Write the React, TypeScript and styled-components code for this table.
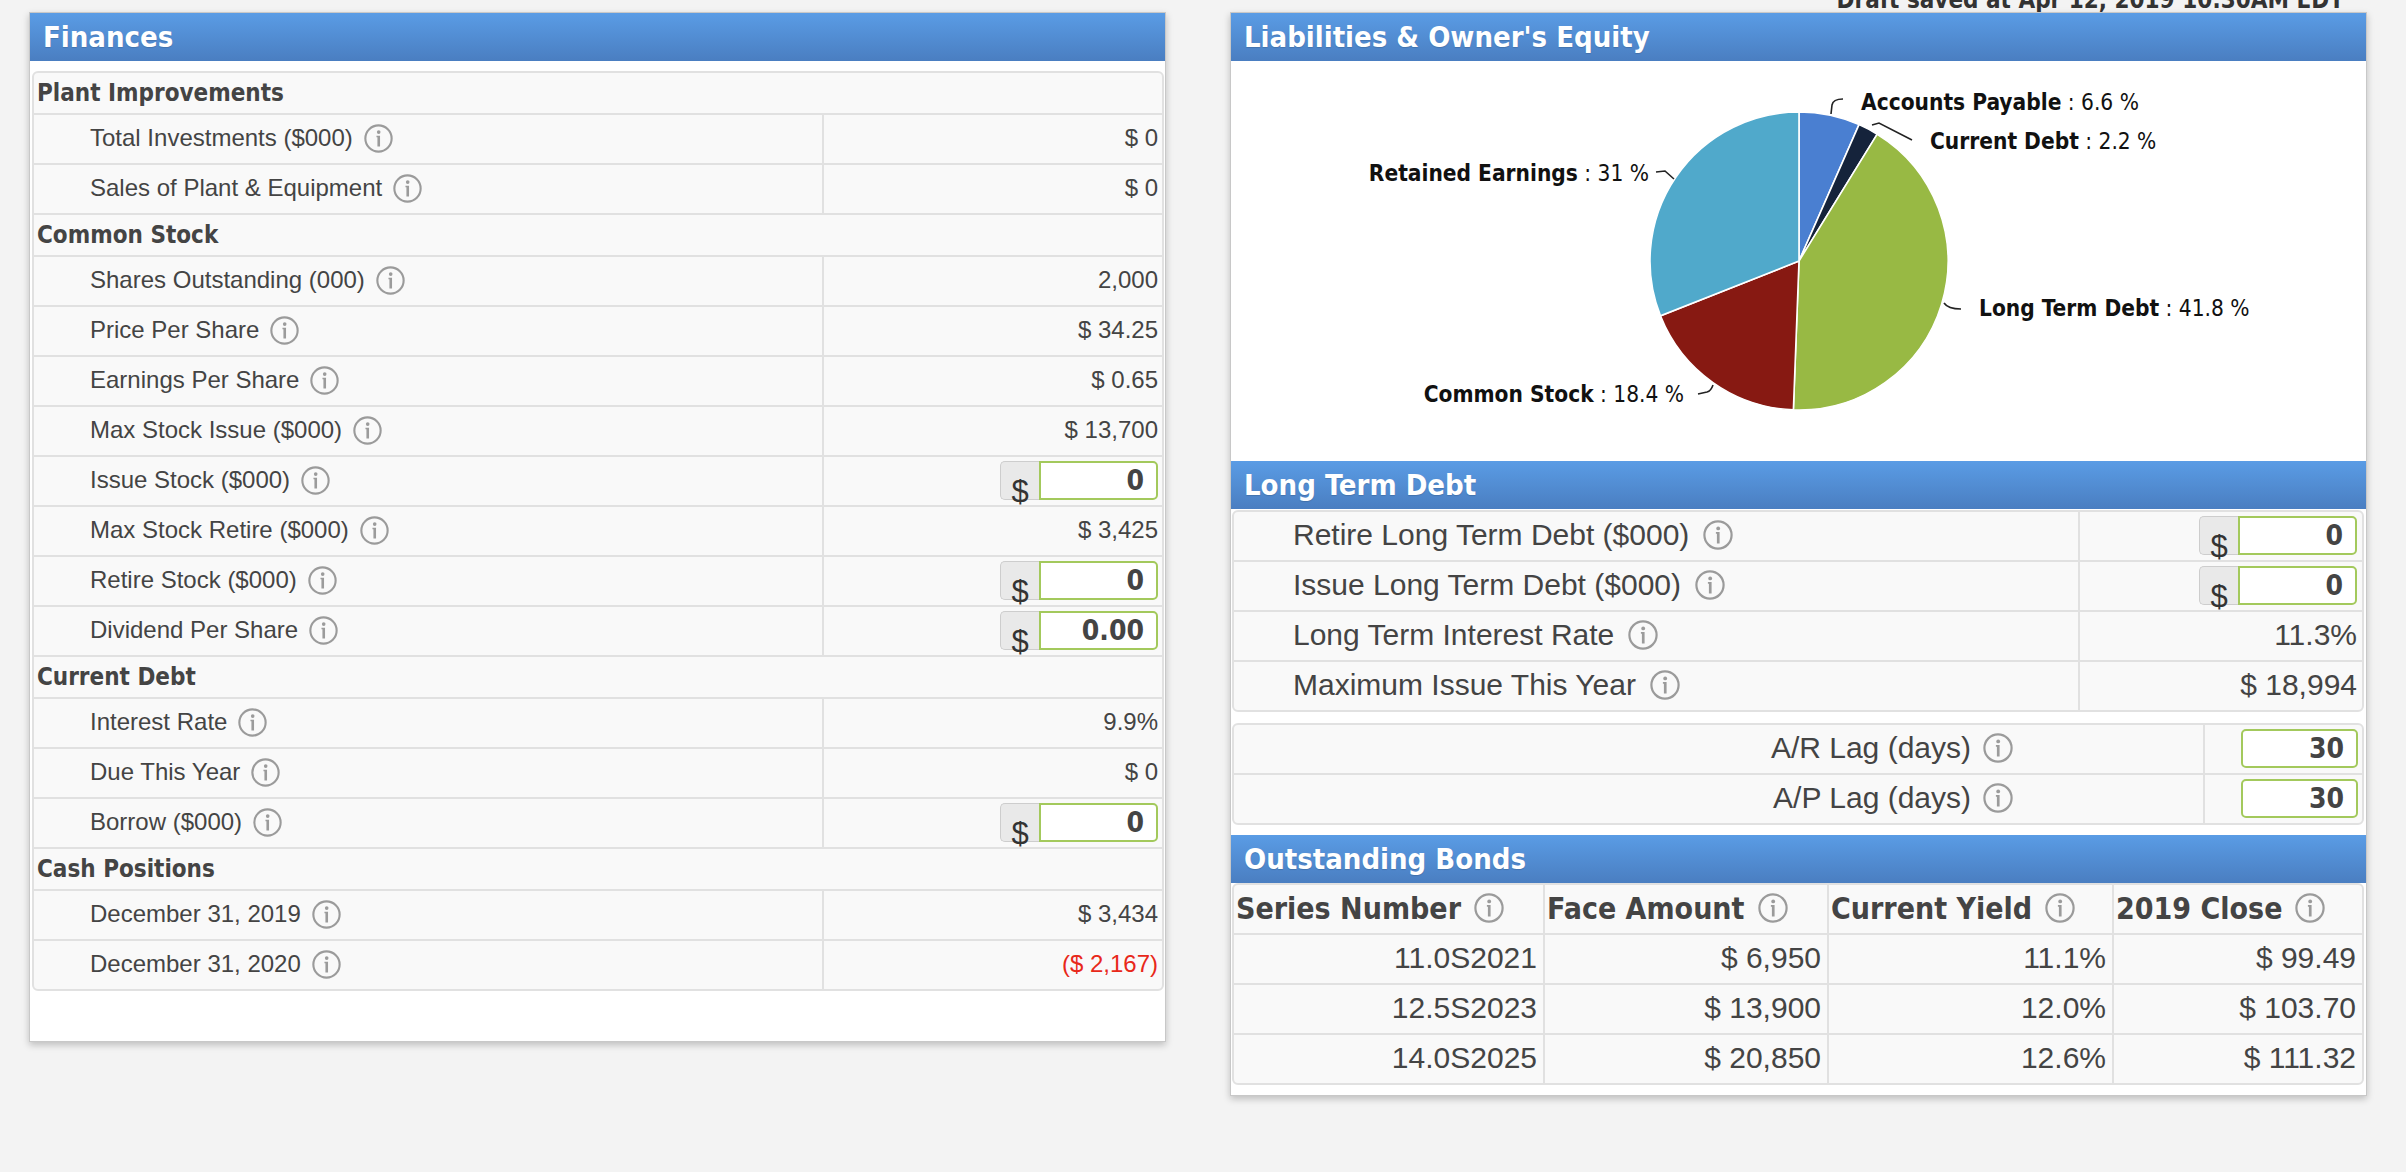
import React from 'react'
import styled, { createGlobalStyle } from 'styled-components'

const HEAD_FONT = `"DejaVu Sans Condensed", "Liberation Sans", sans-serif`
const BODY_FONT = `"Liberation Sans", Arial, sans-serif`
const LINE = '#e1e1e1'

const GlobalStyle = createGlobalStyle`
  html, body {
    margin: 0;
    padding: 0;
  }
  body {
    background: #f3f3f3;
    font-family: ${BODY_FONT};
    color: #444;
  }
`

type FinanceRow = {
  label: string
  value?: string
  input?: string
  negative?: boolean
}

type FinanceSection = {
  title: string
  rows: FinanceRow[]
}

const financeSections: FinanceSection[] = [
  {
    title: 'Plant Improvements',
    rows: [
      { label: 'Total Investments ($000)', value: '$ 0' },
      { label: 'Sales of Plant & Equipment', value: '$ 0' },
    ],
  },
  {
    title: 'Common Stock',
    rows: [
      { label: 'Shares Outstanding (000)', value: '2,000' },
      { label: 'Price Per Share', value: '$ 34.25' },
      { label: 'Earnings Per Share', value: '$ 0.65' },
      { label: 'Max Stock Issue ($000)', value: '$ 13,700' },
      { label: 'Issue Stock ($000)', input: '0' },
      { label: 'Max Stock Retire ($000)', value: '$ 3,425' },
      { label: 'Retire Stock ($000)', input: '0' },
      { label: 'Dividend Per Share', input: '0.00' },
    ],
  },
  {
    title: 'Current Debt',
    rows: [
      { label: 'Interest Rate', value: '9.9%' },
      { label: 'Due This Year', value: '$ 0' },
      { label: 'Borrow ($000)', input: '0' },
    ],
  },
  {
    title: 'Cash Positions',
    rows: [
      { label: 'December 31, 2019', value: '$ 3,434' },
      { label: 'December 31, 2020', value: '($ 2,167)', negative: true },
    ],
  },
]

const longTermRows: FinanceRow[] = [
  { label: 'Retire Long Term Debt ($000)', input: '0' },
  { label: 'Issue Long Term Debt ($000)', input: '0' },
  { label: 'Long Term Interest Rate', value: '11.3%' },
  { label: 'Maximum Issue This Year', value: '$ 18,994' },
]

const lagRows = [
  { label: 'A/R Lag (days)', value: '30' },
  { label: 'A/P Lag (days)', value: '30' },
]

const bondHeads = ['Series Number', 'Face Amount', 'Current Yield', '2019 Close']
const bonds = [
  ['11.0S2021', '$ 6,950', '11.1%', '$ 99.49'],
  ['12.5S2023', '$ 13,900', '12.0%', '$ 103.70'],
  ['14.0S2025', '$ 20,850', '12.6%', '$ 111.32'],
]

// pie, clockwise from 12 o'clock
const slices = [
  { name: 'Accounts Payable', pct: 6.6, color: '#4a7fd1' },
  { name: 'Current Debt', pct: 2.2, color: '#15233b' },
  { name: 'Long Term Debt', pct: 41.8, color: '#98b944' },
  { name: 'Common Stock', pct: 18.4, color: '#871912' },
  { name: 'Retained Earnings', pct: 31, color: '#50a9cb' },
]

const pieLabels = [
  { name: 'Accounts Payable', pct: '6.6', x: 630, y: 49, anchor: 'start', line: 'M600 53 L601 44 Q602 38 612 38' },
  { name: 'Current Debt', pct: '2.2', x: 699, y: 88, anchor: 'start', line: 'M641 64 L648 62 L681 79' },
  { name: 'Retained Earnings', pct: '31', x: 418, y: 120, anchor: 'end', line: 'M425 111 L434 110 L443 118' },
  { name: 'Long Term Debt', pct: '41.8', x: 748, y: 255, anchor: 'start', line: 'M713 242 Q717 248 730 248' },
  { name: 'Common Stock', pct: '18.4', x: 453, y: 341, anchor: 'end', line: 'M467 333 L476 331 Q480 330 482 324' },
]

const Page = styled.div`
  width: 2406px;
  min-height: 1172px;
  box-sizing: border-box;
  padding-left: 29px;
  display: grid;
  grid-template-columns: 1137px 1137px;
  column-gap: 64px;
  align-items: start;
`

const LeftColumn = styled.div`
  padding-top: 12px;
`

const RightColumn = styled.div`
  display: flex;
  flex-direction: column;
`

const DraftNote = styled.div`
  height: 12px;
  display: flex;
  justify-content: flex-end;
  padding-right: 23px;
  font: bold 24px ${HEAD_FONT};
  font-stretch: condensed;
  line-height: 24px;
  color: #333;
  white-space: nowrap;
`

const DraftText = styled.span`
  margin-top: -12px;
`

const Panel = styled.section`
  background: #fff;
  border: 1px solid #c8c8c8;
  box-shadow: 0 3px 7px rgba(0, 0, 0, 0.22);
  box-sizing: border-box;
`

const PanelHeader = styled.h2`
  margin: 0;
  height: 48px;
  padding-left: 13px;
  display: flex;
  align-items: center;
  background: linear-gradient(#5a9ce5, #4a7ec1);
  color: #fff;
  font: bold 29px ${HEAD_FONT};
  font-stretch: condensed;
  text-shadow: 0 1px 1px rgba(0, 0, 0, 0.15);
`

const PanelBody = styled.div<{ $pad: string }>`
  padding: ${(p) => p.$pad};
`

const Table = styled.div<{ $size: number }>`
  border: 2px solid ${LINE};
  border-radius: 6px;
  background: #f9f9f9;
  overflow: hidden;
  font-size: ${(p) => p.$size}px;
  color: #444;

  & > div:last-child {
    border-bottom: 0;
    height: 48px;
  }
`

const Row = styled.div<{ $cols: string }>`
  display: grid;
  grid-template-columns: ${(p) => p.$cols};
  height: 50px;
  box-sizing: border-box;
  border-bottom: 2px solid ${LINE};
`

const SectionRow = styled.div`
  height: 42px;
  box-sizing: border-box;
  border-bottom: 2px solid ${LINE};
  display: flex;
  align-items: center;
  padding-left: 3px;
  font: bold 24px ${HEAD_FONT};
  font-stretch: condensed;
  color: #444;
`

const Cell = styled.div<{
  $right?: boolean
  $padL?: number
  $padR?: number
  $divider?: boolean
  $bold?: boolean
  $red?: boolean
}>`
  display: flex;
  align-items: center;
  justify-content: ${(p) => (p.$right ? 'flex-end' : 'flex-start')};
  padding: 0 ${(p) => p.$padR ?? 0}px 2px ${(p) => p.$padL ?? 0}px;
  border-left: ${(p) => (p.$divider ? `2px solid ${LINE}` : '0')};
  min-width: 0;
  white-space: nowrap;
  color: ${(p) => (p.$red ? '#e8281a' : 'inherit')};
  ${(p) =>
    p.$bold &&
    `font-family: ${HEAD_FONT}; font-weight: bold; font-stretch: condensed;`}
`

const InfoSvg = styled.svg<{ $size: number; $gap: number }>`
  width: ${(p) => p.$size}px;
  height: ${(p) => p.$size}px;
  margin-left: ${(p) => p.$gap}px;
  flex: none;
`

const InputGroup = styled.div`
  display: flex;
  height: 39px;
`

const Addon = styled.span`
  width: 39px;
  height: 39px;
  box-sizing: border-box;
  background: #e9e9e9;
  border: 1px solid #cdcdcd;
  border-right: 0;
  border-radius: 5px 0 0 5px;
  padding-top: 14px;
  text-align: center;
  font: 31px ${BODY_FONT};
  line-height: 31px;
  color: #333;
  overflow: visible;
`

const NumberInput = styled.input<{ $width: number; $joined?: boolean }>`
  width: ${(p) => p.$width}px;
  height: 39px;
  box-sizing: border-box;
  margin: 0;
  border: 2px solid #a3c95c;
  border-radius: ${(p) => (p.$joined ? '0 5px 5px 0' : '5px')};
  background: #fff;
  padding: 0 12px 0 4px;
  text-align: right;
  font: bold 28px ${HEAD_FONT};
  font-stretch: condensed;
  color: #444;
  outline: none;
`

const ChartArea = styled.div`
  height: 400px;
  background: #fff;
`

const ChartSvg = styled.svg`
  display: block;
  width: 1135px;
  height: 400px;
`

const ChartText = styled.text`
  font-family: ${HEAD_FONT};
  font-stretch: condensed;
  font-size: 22.5px;
  fill: #111;
`

const Connector = styled.path`
  fill: none;
  stroke: #222;
  stroke-width: 1.6;
`

const Gap = styled.div<{ $h: number }>`
  height: ${(p) => p.$h}px;
`

function InfoIcon({ size = 30, gap = 10 }: { size?: number; gap?: number }) {
  return (
    <InfoSvg $size={size} $gap={gap} viewBox="0 0 30 30" aria-hidden>
      <circle cx="15" cy="15" r="13.6" fill="none" stroke="#9b9b9b" strokeWidth="2.2" />
      <circle cx="15.2" cy="8.4" r="1.9" fill="#9b9b9b" />
      <path d="M12.9 12.1h3.7v11.3h-2.7v-9.7h-1z" fill="#9b9b9b" />
    </InfoSvg>
  )
}

function Label({ text, size, gap }: { text: string; size?: number; gap?: number }) {
  return (
    <>
      {text}
      <InfoIcon size={size} gap={gap} />
    </>
  )
}

function MoneyInput({ value }: { value: string }) {
  return (
    <InputGroup>
      <Addon>$</Addon>
      <NumberInput $width={119} $joined readOnly defaultValue={value} />
    </InputGroup>
  )
}

function polar(cx: number, cy: number, r: number, deg: number) {
  const a = ((deg - 90) * Math.PI) / 180
  return [cx + r * Math.cos(a), cy + r * Math.sin(a)]
}

function PieChart() {
  const cx = 568
  const cy = 200
  const r = 149
  let start = 0
  return (
    <ChartSvg viewBox="0 0 1135 400">
      {slices.map((s) => {
        const end = start + (s.pct / 100) * 360
        const [x1, y1] = polar(cx, cy, r, start)
        const [x2, y2] = polar(cx, cy, r, end)
        const large = end - start > 180 ? 1 : 0
        const d = `M${cx} ${cy} L${x1} ${y1} A${r} ${r} 0 ${large} 1 ${x2} ${y2} Z`
        start = end
        return <path key={s.name} d={d} fill={s.color} stroke="#fff" strokeWidth="1.6" />
      })}
      {pieLabels.map((l) => (
        <g key={l.name}>
          <Connector d={l.line} />
          <ChartText x={l.x} y={l.y} textAnchor={l.anchor}>
            <tspan fontWeight="bold">{l.name}</tspan>
            {` : ${l.pct} %`}
          </ChartText>
        </g>
      ))}
    </ChartSvg>
  )
}

function FinancesPanel() {
  return (
    <Panel>
      <PanelHeader>Finances</PanelHeader>
      <PanelBody $pad="10px 1px 50px 2px">
        <Table $size={24}>
          {financeSections.map((section) => (
            <React.Fragment key={section.title}>
              <SectionRow>{section.title}</SectionRow>
              {section.rows.map((row) => (
                <Row key={row.label} $cols="1fr 340px">
                  <Cell $padL={56}>
                    <Label text={row.label} size={29} gap={11} />
                  </Cell>
                  <Cell $divider $right $padR={4} $red={row.negative}>
                    {row.input ? <MoneyInput value={row.input} /> : row.value}
                  </Cell>
                </Row>
              ))}
            </React.Fragment>
          ))}
        </Table>
      </PanelBody>
    </Panel>
  )
}

function EquityPanel() {
  return (
    <Panel>
      <PanelHeader>Liabilities &amp; Owner's Equity</PanelHeader>
      <ChartArea>
        <PieChart />
      </ChartArea>
      <PanelHeader>Long Term Debt</PanelHeader>
      <PanelBody $pad="1px 2px 10px 1px">
        <Table $size={30}>
          {longTermRows.map((row) => (
            <Row key={row.label} $cols="1fr 284px">
              <Cell $padL={59}>
                <Label text={row.label} gap={14} />
              </Cell>
              <Cell $divider $right $padR={5}>
                {row.input ? <MoneyInput value={row.input} /> : row.value}
              </Cell>
            </Row>
          ))}
        </Table>
        <Gap $h={11} />
        <Table $size={30}>
          {lagRows.map((row) => (
            <Row key={row.label} $cols="1fr 159px">
              <Cell $right $padR={190}>
                <Label text={row.label} gap={12} />
              </Cell>
              <Cell $divider $right $padR={4}>
                <NumberInput $width={117} readOnly defaultValue={row.value} />
              </Cell>
            </Row>
          ))}
        </Table>
      </PanelBody>
      <PanelHeader>Outstanding Bonds</PanelHeader>
      <PanelBody $pad="0 2px 10px 1px">
        <Table $size={30}>
          <Row $cols="309px 284px 285px 1fr">
            {bondHeads.map((h, i) => (
              <Cell key={h} $bold $padL={2} $divider={i > 0}>
                <Label text={h} gap={13} />
              </Cell>
            ))}
          </Row>
          {bonds.map((b) => (
            <Row key={b[0]} $cols="309px 284px 285px 1fr">
              {b.map((v, i) => (
                <Cell key={i} $right $padR={6} $divider={i > 0}>
                  {v}
                </Cell>
              ))}
            </Row>
          ))}
        </Table>
      </PanelBody>
    </Panel>
  )
}

export default function App() {
  return (
    <>
      <GlobalStyle />
      <Page>
        <LeftColumn>
          <FinancesPanel />
        </LeftColumn>
        <RightColumn>
          <DraftNote>
            <DraftText>Draft saved at Apr 12, 2019 10:30AM EDT</DraftText>
          </DraftNote>
          <EquityPanel />
        </RightColumn>
      </Page>
    </>
  )
}
